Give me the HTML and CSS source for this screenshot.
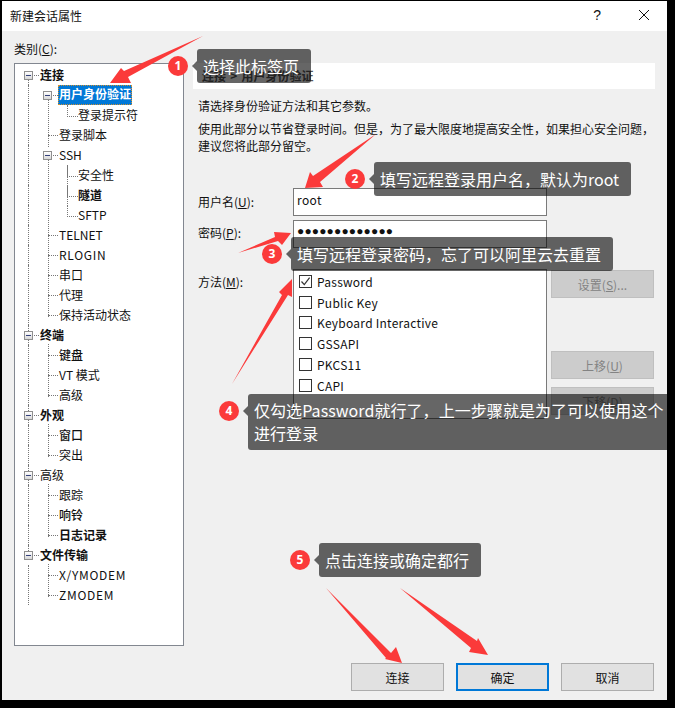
FILE: index.html
```html
<!DOCTYPE html>
<html lang="zh-CN">
<head>
<meta charset="utf-8">
<title>新建会话属性</title>
<link rel="stylesheet" href="styles.css">
</head>
<body>
<div class="window">
  <header class="titlebar">
    <span class="title">新建会话属性</span>
    <div class="title-actions">
      <span class="help">?</span>
      <svg class="close" width="12" height="12" viewBox="0 0 12 12"><path d="M1 1L11 11M11 1L1 11" stroke="#111" stroke-width="1" fill="none"/></svg>
    </div>
  </header>
  <div class="main">
    <aside class="side">
      <div class="cat-label">类别(<u>C</u>):</div>
      <div class="tree">
        <div class="node l0 open bold first"><i class="exp"></i><span class="t">连接</span></div>
        <div class="node l1 open"><i class="exp"></i><span class="t sel">用户身份验证</span></div>
        <div class="node l2 last"><span class="t">登录提示符</span></div>
        <div class="node l1"><span class="t">登录脚本</span></div>
        <div class="node l1 open"><i class="exp"></i><span class="t">SSH</span></div>
        <div class="node l2"><span class="t">安全性</span></div>
        <div class="node l2 bold"><span class="t">隧道</span></div>
        <div class="node l2 last"><span class="t">SFTP</span></div>
        <div class="node l1"><span class="t">TELNET</span></div>
        <div class="node l1"><span class="t ls">RLOGIN</span></div>
        <div class="node l1"><span class="t">串口</span></div>
        <div class="node l1"><span class="t">代理</span></div>
        <div class="node l1 last"><span class="t">保持活动状态</span></div>
        <div class="node l0 open bold"><i class="exp"></i><span class="t">终端</span></div>
        <div class="node l1 mid"><span class="t">键盘</span></div>
        <div class="node l1"><span class="t">VT 模式</span></div>
        <div class="node l1 last"><span class="t">高级</span></div>
        <div class="node l0 open bold"><i class="exp"></i><span class="t">外观</span></div>
        <div class="node l1 mid"><span class="t">窗口</span></div>
        <div class="node l1 last"><span class="t">突出</span></div>
        <div class="node l0 open"><i class="exp"></i><span class="t">高级</span></div>
        <div class="node l1"><span class="t">跟踪</span></div>
        <div class="node l1 mid"><span class="t">响铃</span></div>
        <div class="node l1 last bold"><span class="t">日志记录</span></div>
        <div class="node l0 open bold final"><i class="exp"></i><span class="t">文件传输</span></div>
        <div class="node l1"><span class="t ls">X/YMODEM</span></div>
        <div class="node l1 last"><span class="t ls">ZMODEM</span></div>
      </div>
    </aside>
    <section class="pane">
      <div class="crumb">连接 &gt; 用户身份验证</div>
      <p class="lead">请选择身份验证方法和其它参数。</p>
      <p class="note">使用此部分以节省登录时间。但是，为了最大限度地提高安全性，如果担心安全问题，<br>建议您将此部分留空。</p>
      <div class="form">
        <label class="flabel">用户名(<u>U</u>):</label>
        <div class="input">root</div>
        <span></span>
        <label class="flabel tight">密码(<u>P</u>):</label>
        <div class="input pass">●●●●●●●●●●●●●</div>
        <span></span>
        <label class="flabel method">方法(<u>M</u>):</label>
        <div class="list">
          <div class="check-row"><i class="box on"><svg width="11" height="11" viewBox="0 0 11 11"><path d="M1.5 5.5L4.3 8.6L9.6 1.6" stroke="#333" stroke-width="1.2" fill="none"/></svg></i>Password</div>
          <div class="check-row"><i class="box"></i>Public Key</div>
          <div class="check-row"><i class="box"></i>Keyboard Interactive</div>
          <div class="check-row"><i class="box"></i>GSSAPI</div>
          <div class="check-row"><i class="box"></i>PKCS11</div>
          <div class="check-row"><i class="box"></i>CAPI</div>
        </div>
        <div class="side-btns">
          <button class="btn off">设置(<u>S</u>)...</button>
          <button class="btn off move">上移(<u>U</u>)</button>
          <button class="btn off">下移(<u>D</u>)</button>
        </div>
      </div>
    </section>
  </div>
  <footer class="footer">
    <button class="btn">连接</button>
    <button class="btn default">确定</button>
    <button class="btn">取消</button>
  </footer>
</div>

<svg class="arrows" width="675" height="708" viewBox="0 0 675 708">
  <g fill="#fb3a3a">
    <polygon points="203,36 124,71 121,68 110,83 131,83 128,77"/>
    <polygon points="376,134 313,176 310,172 305,188 323,187 320,182"/>
    <polygon points="238,253 275,237 274,232 291,233 282,245 278,241"/>
    <polygon points="232,384 282,295 279,292 292,279 292,297 288,295"/>
    <polygon points="326,588 391,653 396,647 402,663 385,659 386,658"/>
    <polygon points="400,588 477,641 478,638 488,655 469,652 471,648"/>
  </g>
</svg>

<div class="note-tip t1"><b class="badge">1</b><span class="tip">选择此标签页</span></div>
<div class="note-tip t2"><b class="badge">2</b><span class="tip">填写远程登录用户名，默认为root</span></div>
<div class="note-tip t3"><b class="badge">3</b><span class="tip">填写远程登录密码，忘了可以阿里云去重置</span></div>
<div class="note-tip t4"><b class="badge">4</b><span class="tip wide">仅勾选Password就行了，上一步骤就是为了可以使用这个进行登录</span></div>
<div class="note-tip t5"><b class="badge">5</b><span class="tip">点击连接或确定都行</span></div>
</body>
</html>
```

FILE: styles.css
```css
* { box-sizing: border-box; }
html, body { margin: 0; height: 100%; }
body {
  background: #000;
  padding: 1px 8px 8px 2px;
  font: 12px/17px "Noto Sans CJK SC", "Noto Sans", sans-serif;
  color: #111;
  position: relative;
  overflow: hidden;
}
p { margin: 0; }
u { text-underline-offset: 1px; }

.window {
  width: 665px;
  height: 699px;
  background: #f0f0f0;
  display: flex;
  flex-direction: column;
}
.titlebar {
  height: 30px;
  background: #fff;
  flex: none;
  display: flex;
  align-items: center;
  justify-content: space-between;
  padding: 0 17px 2px 8px;
}
.title-actions { display: flex; align-items: center; gap: 37px; }
.help { font: 14px "Liberation Sans", sans-serif; }
.close { display: block; }

.main { flex: 1; display: flex; gap: 9px; padding: 10px 0 0 12px; min-height: 0; }
.side { width: 170px; flex: none; }
.cat-label { height: 16px; line-height: 16px; margin-bottom: 6px; }

.tree {
  height: 583px;
  background: #fff;
  border: 1px solid #828790;
  padding-top: 1px;
}
.node {
  height: 20px;
  position: relative;
  display: flex;
  align-items: center;
  white-space: nowrap;
}
.l0 { padding-left: 25px; }
.l1 { padding-left: 44px; }
.l2 { padding-left: 63px; }
.bold .t { font-weight: 700; }
.mid .t { font-weight: 500; }
.t { position: relative; z-index: 1; padding-bottom: 2px; }
.ls { letter-spacing: .7px; }

.node::before, .node::after { content: ""; position: absolute; }
.l0::before, .l1::before, .l2::before { left: 13px; top: 0; bottom: 0; border-left: 1px dotted #777; }
.l0.first::before { top: 10px; }
.l0.final::before { bottom: 10px; }
.l0::after { left: 13px; width: 11px; top: 10px; border-top: 1px dotted #777; }
.l1::after { left: 33px; width: 10px; top: 10px; border-top: 1px dotted #777; height: 0; }
.l2::after { left: 52px; width: 10px; top: 0; height: 11px; border-left: 1px dotted #777; border-bottom: 1px dotted #777; }
.l1 > .t::before {
  content: ""; position: absolute; left: -11px; top: -2px; bottom: -2px;
  border-left: 1px dotted #777;
}
.l1.last > .t::before { bottom: 8px; }
.l1.open > .t::before { top: 8px; }
.l2 > .t::before {
  content: ""; position: absolute; left: -30px; top: -2px; bottom: -2px;
  border-left: 1px dotted #777;
}
.l2:not(.last) > .t::after {
  content: ""; position: absolute; left: -11px; top: -1px; bottom: -1px;
  border-left: 1px dotted #777;
}
.exp {
  position: absolute;
  width: 9px; height: 9px;
  top: 6px;
  background: linear-gradient(#fff, #d8d8d8);
  border: 1px solid #8f8f8f;
  z-index: 2;
}
.exp::after { content: ""; position: absolute; left: 1px; right: 1px; top: 3px; border-top: 1px solid #33407a; }
.l0 .exp { left: 9px; }
.l1 .exp { left: 28px; }
.l1 > .sel {
  background: #0078d7;
  color: #fff;
  font-weight: 700;
  padding: 0 1px 2px;
  margin-left: -1px;
  line-height: 18px;
  height: 20px;
  outline: 1px dotted #d09030;
  outline-offset: -1px;
}
.l1 > .sel::before { left: -10px; }

.pane { width: 462px; padding-top: 22px; flex: none; }
.crumb {
  height: 26px;
  background: #fff;
  padding-left: 9px;
  line-height: 26px;
  color: #555;
  font-weight: 700;
  word-spacing: 1.5px;
}
.lead { margin: 8px 0 6px 5px; }
.note { margin-left: 5px; }
.form {
  margin: 34px 0 0 5px;
  display: grid;
  grid-template-columns: 95px 254px 103px;
  grid-template-rows: 28px 28px 167px;
  row-gap: 4px;
}
.form > .side-btns { margin-left: 4px; }
.flabel { line-height: 28px; }
.tight { line-height: 26px; }
.method { margin-top: 17px; line-height: 26px; }
.input {
  background: #fff;
  border: 1px solid #7a7a7a;
  padding: 1px 3px;
  line-height: 20px;
  letter-spacing: .4px;
}
.pass { font: 12px/18px "Liberation Sans", sans-serif; letter-spacing: .15px; }
.list {
  margin-top: 17px;
  height: 150px;
  background: #fff;
  border: 1px solid #7a7a7a;
  padding: 1px 0 0 5px;
}
.check-row {
  height: 20.8px;
  display: flex;
  align-items: center;
  gap: 5px;
  letter-spacing: .25px;
}
.box {
  width: 13px; height: 13px;
  border: 1px solid #333;
  background: #fff;
  display: block;
  flex: none;
}
.box svg { display: block; }
.side-btns { display: flex; flex-direction: column; margin-top: 18px; }
.btn {
  width: 93px;
  height: 28px;
  background: #e1e1e1;
  border: 1px solid #adadad;
  font: inherit;
  color: #111;
  padding: 0;
}
.btn.off {
  width: 103px;
  background: #ccc;
  border-color: #bfbfbf;
  color: #838383;
  margin-top: 8px;
}
.btn.off:first-child { margin-top: 0; }
.btn.off.move { margin-top: 53px; }
.default { border: 2px solid #0078d7; }
.footer {
  display: flex;
  justify-content: flex-end;
  gap: 12px;
  padding: 0 13px 9px 0;
  flex: none;
}

.arrows { position: absolute; left: 0; top: 0; pointer-events: none; }
.note-tip { position: absolute; display: flex; align-items: center; }
.t1 { left: 168px; top: 49px; }
.t2 { left: 345px; top: 162px; }
.t3 { left: 262px; top: 237px; }
.t4 { left: 219px; top: 394px; align-items: flex-start; }
.t5 { left: 290px; top: 543px; }
.badge {
  width: 20px; height: 20px;
  border-radius: 50%;
  background: #fb3a3a;
  color: #fff;
  font: 700 12px/20px "Noto Sans", sans-serif;
  text-align: center;
  margin-right: 9px;
  flex: none;
}
.t4 .badge { margin-top: 7px; }
.tip {
  position: relative;
  height: 34px;
  padding: 0 12px 0 6px;
  background: rgba(0,0,0,.6);
  color: #fff;
  border-radius: 3px;
  font-size: 16px;
  line-height: 34px;
  white-space: nowrap;
}
.tip::before {
  content: "";
  position: absolute;
  left: -5px; top: 12px;
  border: 5px solid transparent;
  border-left: 0;
  border-right-color: rgba(0,0,0,.6);
}
.tip.wide {
  width: 419px;
  height: 56px;
  white-space: normal;
  line-height: 23px;
  border-radius: 3px 0 0 3px;
  padding: 5px 0 0 6px;
  letter-spacing: .06px;
}
```
